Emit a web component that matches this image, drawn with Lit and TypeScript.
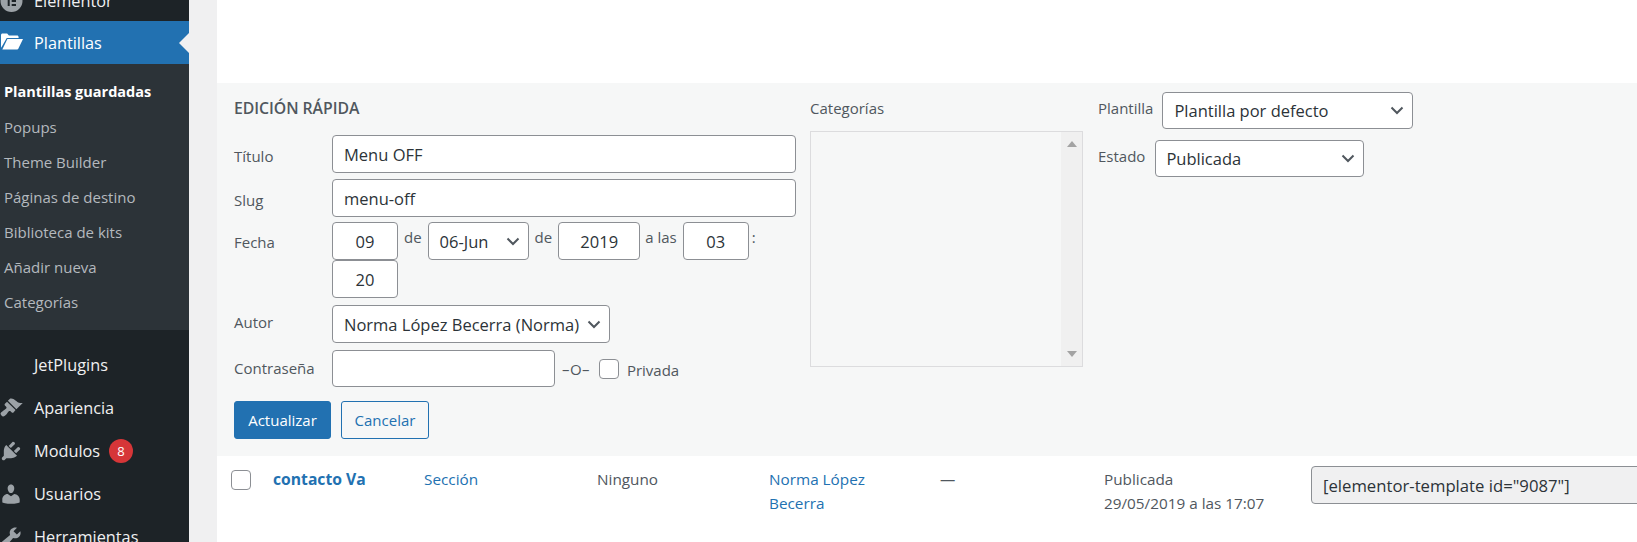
import { LitElement, html, css, svg } from "lit";
import { customElement } from "lit/decorators.js";

const ICONS: Record<string, { box: string; art: unknown }> = {
  elementor: {
    box: "0 0 24 24",
    art: svg`<path fill-rule="evenodd" d="M12.500 1a11 11 0 1 0 0 22a11 11 0 0 0 0-22ZM8.700 7h2v10h-2ZM12.700 7h4.300v2h-4.300ZM12.700 11h4.300v2h-4.300ZM12.700 15h4.300v2h-4.300Z"/>`,
  },
  folder: {
    box: "0 0 24 24",
    art: svg`<g transform="translate(2 -1) scale(1.100 1.140)"><path d="M0 4.500C0 3.600.6 3 1.400 3h4.200l1.600 1.900h7.400c.8 0 1.400.6 1.400 1.400V7H5.200L1.600 13.200 0 15.500ZM5.800 8H20l-4.400 8.600c-.2.3-.5.4-.8.400H1.200Z"/></g>`,
  },
  brush: {
    box: "0 0 20 20",
    art: svg`<path d="M14.480 11.060L7.410 3.990l1.500-1.500c.5-.56 2.300-.47 3.510.32 1.210.8 1.430 1.280 2.910 2.100 1.180.64 2.450 1.260 4.450.85zm-.71.71L6.700 4.700 4.930 6.470c-.39.39-.39 1.020 0 1.410l1.060 1.060c.39.39.39 1.030 0 1.420-.6.6-1.430 1.110-2.210 1.690-.35.26-.7.53-1.010.84C1.430 13.710.96 14.650 1.500 15.500c.17.27.37.52.6.75.23.23.48.43.75.6.85.54 1.790.07 2.790-.93.31-.31.58-.66.84-1.010.58-.78 1.090-1.610 1.690-2.210.39-.39 1.030-.39 1.420 0l1.060 1.060c.39.39 1.020.39 1.410 0z"/>`,
  },
  plug: {
    box: "0 0 20 20",
    art: svg`<path d="M13.110 4.360L9.870 7.600 8 5.730l3.240-3.240c.35-.34 1.050-.2 1.560.32.52.51.66 1.210.31 1.550zm-8 1.770l.91-1.120 9.010 9.010-1.190.84c-.71.71-2.630 1.160-3.820 1.160H6.140L4.900 17.260c-.59.59-1.540.59-2.120 0-.59-.58-.59-1.530 0-2.120l1.240-1.240v-3.880c0-1.130.46-3.050 1.090-3.890zm7.260 3.970l3.240-3.240c.34-.35 1.040-.21 1.550.31.52.51.66 1.210.31 1.550l-3.240 3.250z"/>`,
  },
  user: {
    box: "0 0 20 20",
    art: svg`<path d="M10 9.250c-2.270 0-2.730-3.440-2.730-3.440C7 4.020 7.820 2 9.970 2c2.160 0 2.980 2.020 2.710 3.810 0 0-.41 3.440-2.680 3.440zm0 2.570L12.720 10c2.390 0 4.520 2.330 4.520 4.530v2.490s-3.650 1.130-7.240 1.130c-3.650 0-7.240-1.130-7.240-1.130v-2.490c0-2.250 1.940-4.480 4.470-4.480z"/>`,
  },
  wrench: {
    box: "0 0 20 20",
    art: svg`<path d="M16.680 9.770c-1.340 1.340-3.300 1.670-4.950.99l-5.410 6.520c-.99.99-2.590.99-3.580 0s-.99-2.590 0-3.570l6.520-5.420c-.68-1.650-.35-3.610.99-4.950 1.280-1.280 3.120-1.620 4.720-1.060l-2.890 2.890 2.820 2.820 2.860-2.870c.53 1.580.18 3.400-1.080 4.670zM3.810 16.210c.4.39 1.030.39 1.420 0 .4-.4.4-1.030 0-1.430-.39-.39-1.020-.39-1.420 0-.39.4-.39 1.030 0 1.430z"/>`,
  },
};

const chevron = html`<svg class="chev" viewBox="0 0 14 9" aria-hidden="true"><path d="M1.500 1.500 7 7l5.500-5.500" fill="none" stroke="#50575e" stroke-width="2"/></svg>`;

@customElement("app-root")
export class AppRoot extends LitElement {
  static styles = css`
    :host {
      display: block;
      width: 1637px;
      height: 542px;
      overflow: hidden;
      background: #f0f0f1;
      font-family: "Open Sans", "Noto Sans", sans-serif;
      font-size: 15px;
      color: #50575e;
    }
    .page { display: flex; height: 542px; overflow: hidden; }

    .side {
      width: 189px;
      flex: none;
      background: #1d2327;
      overflow: hidden;
    }
    .menu { margin-top: -20px; }
    .mi {
      height: 43px;
      display: flex;
      align-items: center;
      gap: 11px;
      color: #f0f0f1;
      font-size: 16.300px;
      position: relative;
    }
    .mi.first { height: 41px; }
    .mi svg { width: 24px; height: 24px; flex: none; fill: #9ca2a7; margin-left: -1px; }
    .mi .slot { width: 23px; flex: none; }
    .mi.on { background: #2271b1; color: #fff; }
    .mi.on svg { fill: #fff; }
    .mi.on::after {
      content: "";
      position: absolute;
      right: 0;
      top: 12px;
      border: 10px solid transparent;
      border-right-color: #f0f0f1;
      border-left-width: 0;
    }
    .badge {
      width: 24px;
      height: 24px;
      border-radius: 50%;
      background: #d63638;
      color: #fff;
      font-size: 13px;
      display: flex;
      align-items: center;
      justify-content: center;
      margin-left: -2px;
    }
    .sub {
      background: #2c3338;
      padding: 10.500px 0;
      margin-bottom: 13.500px;
    }
    .sub div {
      height: 35px;
      line-height: 34px;
      padding-left: 4px;
      font-size: 15px;
      color: #b4b9be;
      white-space: nowrap;
    }
    .sub .cur { color: #fff; font-weight: 700; font-size: 14.500px; }

    .main {
      margin-left: 28px;
      flex: 1;
      min-width: 0;
      background: #fff;
      padding-top: 83px;
      overflow: hidden;
    }
    .qe {
      height: 373px;
      box-sizing: border-box;
      background: #f6f7f7;
      display: flex;
      padding: 9px 0 0 17px;
    }
    .c1 { width: 562px; flex: none; display: flex; flex-direction: column; }
    .c2 { width: 273px; flex: none; margin-left: 14px; }
    .c3 { margin-left: 15px; display: flex; flex-direction: column; gap: 11px; }

    .title {
      height: 33px;
      line-height: 33px;
      font-weight: 600;
      font-size: 15.800px;
      letter-spacing: -0.05px;
      color: #50575e;
      margin-bottom: 10px;
      white-space: nowrap;
    }
    .row { display: flex; align-items: center; margin-bottom: 7px; white-space: nowrap; }
    .row.tight-a { margin-bottom: 6px; }
    .row.tight-b { margin-bottom: 5px; }
    .row.top { align-items: flex-start; }
    .lbl { width: 98px; flex: none; }
    .lbl.down { margin-top: 3px; }
    .lbl.up { margin-top: -5px; }
    .lbl.date-lbl { margin-top: 10px; }
    .lbl.pw { margin-top: -2px; }
    .box {
      box-sizing: border-box;
      height: 38px;
      background: #fff;
      border: 1px solid #8c8f94;
      border-radius: 4px;
      color: #2c3338;
      font-size: 16.500px;
      display: flex;
      align-items: center;
      padding: 0 11px;
      white-space: nowrap;
      flex: none;
    }
    .select { justify-content: space-between; padding-right: 8px; }
    .chev { width: 14px; height: 9px; flex: none; }
    .wide { width: 464px; }
    .num { width: 66px; justify-content: center; padding: 0; }
    .date { display: flex; flex-wrap: wrap; width: 464px; align-items: flex-start; }
    .txt { margin: 5px 6px 0; }
    .txt.c { margin: 5px 0 0 3px; }
    .month { width: 101px; }
    .year { width: 82px; justify-content: center; padding: 0; }
    .year + .txt { margin-right: 6px; margin-left: 5px; }
    .author { width: 278px; padding-right: 8px; }
    .pass { width: 223px; height: 37px; }
    .or { margin-left: 7px; letter-spacing: 0.4px; }
    .cb {
      box-sizing: border-box;
      width: 20px;
      height: 20px;
      border: 1px solid #8c8f94;
      border-radius: 4px;
      background: #fff;
      flex: none;
    }
    .or + .cb { margin-left: 9px; margin-right: 8px; }
    .pv { margin-top: 2px; }
    .btns { display: flex; gap: 10px; margin-top: 7px; }
    .btn {
      box-sizing: border-box;
      height: 38px;
      border-radius: 3px;
      border: 1px solid #2271b1;
      display: flex;
      align-items: center;
      justify-content: center;
      font-size: 15px;
    }
    .primary { width: 97px; background: #2271b1; color: #fff; }
    .second { width: 88px; color: #2271b1; background: #f6f7f7; }

    .c2 .cap { height: 33px; line-height: 33px; margin-bottom: 6px; }
    .cats {
      box-sizing: border-box;
      height: 236px;
      width: 273px;
      border: 1px solid #dcdcde;
      display: flex;
      justify-content: flex-end;
    }
    .scroll {
      width: 21px;
      background: #f0f0f0;
      display: flex;
      flex-direction: column;
      justify-content: space-between;
      align-items: center;
      padding: 9px 0;
    }
    .scroll i { width: 0; height: 0; border: 5px solid transparent; border-top: 0; border-bottom: 6px solid #a3a3a3; }
    .scroll i.d { border-bottom: 0; border-top: 6px solid #a3a3a3; }
    .pick { display: flex; align-items: flex-start; gap: 9px; white-space: nowrap; }
    .pick > span { margin-top: 6px; }
    .tpl { width: 251px; height: 37px; padding-left: 11px; }
    .est { width: 209px; height: 37px; padding-left: 10px; margin-left: 1px; }

    .tr { display: flex; height: 86px; font-size: 15.300px; }
    .tr > * { flex: none; }
    .tr .cb { margin: 14px 0 0 14px; }
    .cell { margin-top: 11px; line-height: 24px; white-space: nowrap; }
    .link { color: #2271b1; }
    .name { width: 151px; margin: 12px 0 0 22px; font-weight: 700; font-size: 15.700px; line-height: 22px; }
    .type { width: 173px; }
    .none { width: 172px; }
    .auth { width: 171px; }
    .dash { width: 164px; }
    .stat { width: 207px; color: #50575e; }
    .code {
      width: 400px;
      margin-top: 10px;
      background: #f0f0f1;
      font-size: 16.700px;
      justify-content: flex-start;
      color: #2c3338;
    }
  `;

  private menuItem(icon: string | null, label: string, extra: unknown = "", cls = "") {
    return html`<div class="mi ${cls}">
      ${icon
        ? html`<svg viewBox=${ICONS[icon].box} aria-hidden="true">${ICONS[icon].art}</svg>`
        : html`<span class="slot"></span>`}
      <span>${label}</span>${extra}
    </div>`;
  }

  render() {
    return html`<div class="page">
      <nav class="side">
        <div class="menu">
          ${this.menuItem("elementor", "Elementor", "", "first")}
          ${this.menuItem("folder", "Plantillas", "", "on")}
          <div class="sub">
            <div class="cur">Plantillas guardadas</div>
            <div>Popups</div>
            <div>Theme Builder</div>
            <div>Páginas de destino</div>
            <div>Biblioteca de kits</div>
            <div>Añadir nueva</div>
            <div>Categorías</div>
          </div>
          ${this.menuItem(null, "JetPlugins")}
          ${this.menuItem("brush", "Apariencia")}
          ${this.menuItem("plug", "Modulos", html`<span class="badge">8</span>`)}
          ${this.menuItem("user", "Usuarios")}
          ${this.menuItem("wrench", "Herramientas")}
        </div>
      </nav>
      <main class="main">
        <section class="qe">
          <div class="c1">
            <div class="title">EDICIÓN RÁPIDA</div>
            <div class="row tight-a"><span class="lbl down">Título</span><div class="box wide">Menu OFF</div></div>
            <div class="row tight-b"><span class="lbl down">Slug</span><div class="box wide">menu-off</div></div>
            <div class="row top">
              <span class="lbl date-lbl">Fecha</span>
              <div class="date">
                <div class="box num">09</div><span class="txt">de</span>
                <div class="box select month">06-Jun ${chevron}</div><span class="txt">de</span>
                <div class="box year">2019</div><span class="txt">a las</span>
                <div class="box num">03</div><span class="txt c">:</span>
                <div class="box num">20</div>
              </div>
            </div>
            <div class="row"><span class="lbl up">Autor</span><div class="box select author">Norma López Becerra (Norma) ${chevron}</div></div>
            <div class="row">
              <span class="lbl pw">Contraseña</span><div class="box pass"></div>
              <span class="or">–O–</span><span class="cb"></span><span class="pv">Privada</span>
            </div>
            <div class="btns"><div class="btn primary">Actualizar</div><div class="btn second">Cancelar</div></div>
          </div>
          <div class="c2">
            <div class="cap">Categorías</div>
            <div class="cats"><div class="scroll"><i></i><i class="d"></i></div></div>
          </div>
          <div class="c3">
            <div class="pick"><span>Plantilla</span><div class="box select tpl">Plantilla por defecto ${chevron}</div></div>
            <div class="pick"><span>Estado</span><div class="box select est">Publicada ${chevron}</div></div>
          </div>
        </section>
        <div class="tr">
          <span class="cb"></span>
          <div class="cell name link">contacto Va</div>
          <div class="cell type link">Sección</div>
          <div class="cell none">Ninguno</div>
          <div class="cell auth link">Norma López<br />Becerra</div>
          <div class="cell dash">—</div>
          <div class="cell stat">Publicada<br />29/05/2019 a las 17:07</div>
          <div class="box code">[elementor-template id="9087"]</div>
        </div>
      </main>
    </div>`;
  }
}
